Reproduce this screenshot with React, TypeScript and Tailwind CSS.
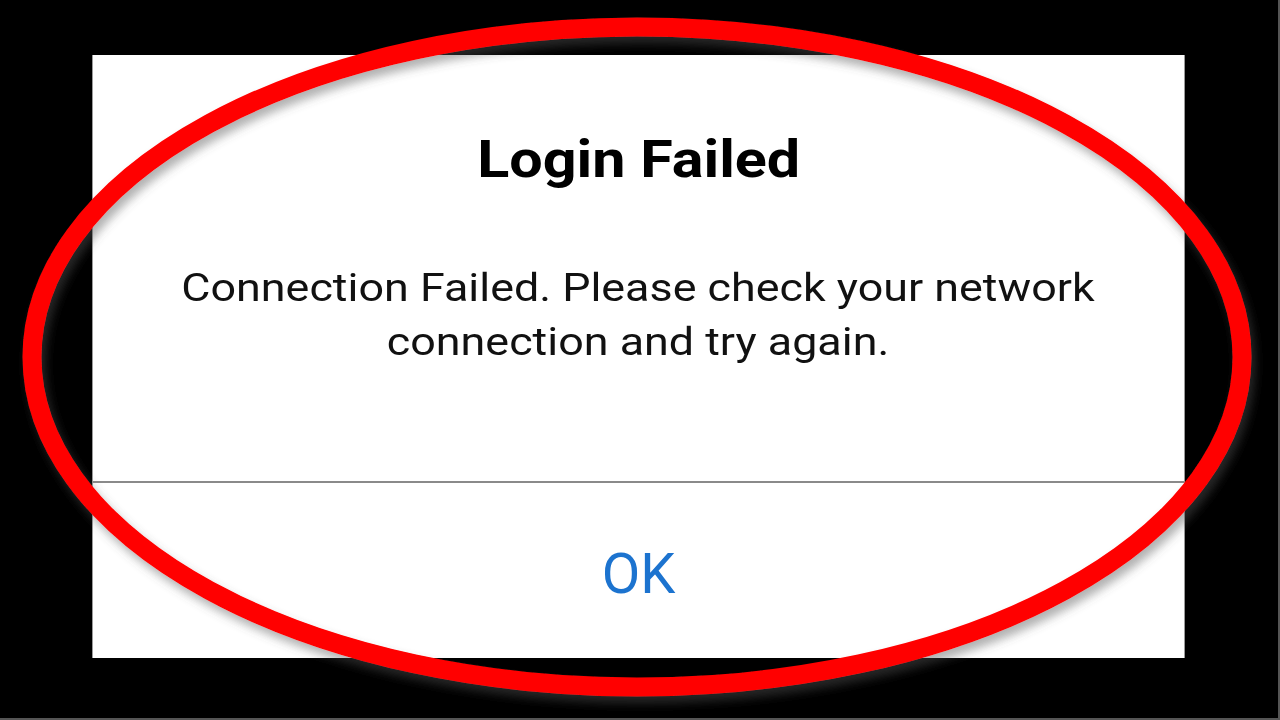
export default function App() {
  return (
    <div className="relative h-[720px] w-[1280px] overflow-hidden bg-black font-['Roboto',sans-serif]">
      <div className="pl-[92px] pt-[55px]">
        <div className="flex h-[603px] w-[1093px] flex-col border-x border-[#9a9a9a] bg-white">
          <div className="flex h-[426px] flex-col items-center pt-[75px]">
            <h1 className="scale-x-[1.14] text-[52px] leading-[60px] font-bold text-black">Login Failed</h1>
            <p className="mt-[71px] scale-x-[1.18] text-center text-[38px] leading-[54px] text-[#111]">
              Connection Failed. Please check your network
              <br />
              connection and try again.
            </p>
          </div>
          <div className="h-[2px] bg-[#8a8a8a]" />
          <div className="flex flex-1 items-center justify-center pt-[6px]">
            <button className="text-[56px] leading-none text-[#1c73cf]">OK</button>
          </div>
        </div>
      </div>

      {/* red highlight ring */}
      <svg className="pointer-events-none absolute inset-0" width="1280" height="720">
        <defs>
          <filter id="ringShadow" x="-10%" y="-10%" width="120%" height="120%">
            <feDropShadow dx="4" dy="7" stdDeviation="5" floodColor="#555" floodOpacity="0.45" />
          </filter>
        </defs>
        <ellipse cx="637" cy="357" rx="605" ry="330" fill="none" stroke="#ff0000" strokeWidth="19" filter="url(#ringShadow)" />
      </svg>

      <div className="absolute bottom-0 left-0 h-[2px] w-full bg-[#555]" />
      <div className="absolute right-0 top-0 h-full w-[2px] bg-[#555]" />
    </div>
  )
}
